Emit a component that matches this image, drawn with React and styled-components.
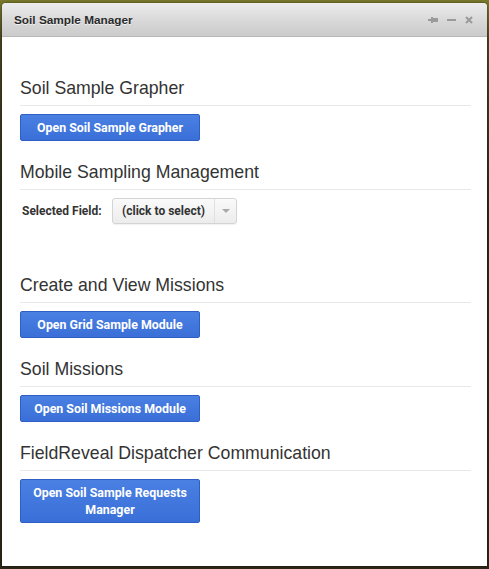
import React from 'react';
import styled, {createGlobalStyle} from 'styled-components';

const GlobalStyle = createGlobalStyle`
  html, body {
    margin: 0;
    padding: 0;
    height: 100%;
  }
  body {
    background: linear-gradient(180deg, #7a7a2c 0px, #4a4522 40px, #2b2a1c 200px, #2c2718 569px);
    font-family: "Liberation Sans", Arial, sans-serif;
  }
`;

const Page = styled.div`
  width: 489px;
  height: 569px;
  padding: 3px 2px 0 2px;
  box-sizing: border-box;
`;

const Window = styled.div`
  width: 485px;
  height: 563px;
  background: #fff;
  border-radius: 4px 4px 0 0;
  overflow: hidden;
  display: flex;
  flex-direction: column;
  box-shadow: 0 0 3px rgba(0, 0, 0, 0.5);
`;

const TitleBar = styled.div`
  height: 33px;
  flex: none;
  display: flex;
  align-items: center;
  justify-content: space-between;
  padding: 0 14px 0 12px;
  background: linear-gradient(180deg, #ececec 0%, #d6d6d6 60%, #cbcbcb 100%);
  border-bottom: 1px solid #b8b8b8;
`;

const Title = styled.div`
  font-size: 11.8px;
  font-weight: bold;
  color: #2a2a2a;
  text-shadow: 0 1px 0 rgba(255, 255, 255, 0.7);
`;

const Tools = styled.div`
  display: flex;
  align-items: center;
  gap: 9px;
`;

const Body = styled.div`
  padding: 41px 16px 0 18px;
`;

const Section = styled.div`
  margin-bottom: ${p => p.$gap || 21}px;
`;

const Heading = styled.h2`
  margin: 0 0 8px 0;
  padding: 0 0 7px 0;
  font-size: 17.7px;
  line-height: 20px;
  font-weight: normal;
  color: #333;
  border-bottom: 1px solid #e8e8e8;
`;

const Button = styled.button`
  display: block;
  width: 180px;
  min-height: 26px;
  padding: 4px 10px;
  border: 1px solid #2f5fc4;
  border-radius: 2px;
  background: linear-gradient(180deg, #4a80e2 0%, #3a6fd8 100%);
  color: #fff;
  font-family: Roboto, "Liberation Sans", Arial, sans-serif;
  font-size: 12.4px;
  font-weight: bold;
  line-height: 17px;
  text-align: center;
  cursor: pointer;
`;

const FieldRow = styled.div`
  display: flex;
  align-items: center;
  padding-left: 2px;
  margin-top: 4px;
`;

const Label = styled.span`
  font-family: Roboto, "Liberation Sans", Arial, sans-serif;
  font-size: 12px;
  font-weight: bold;
  color: #333;
  width: 90px;
`;

const Select = styled.div`
  display: flex;
  width: 125px;
  height: 26px;
  box-sizing: border-box;
  border: 1px solid #d4d4d4;
  border-radius: 3px;
  background: linear-gradient(180deg, #fafafa 0%, #ececec 100%);
  box-shadow: 0 1px 1px rgba(0, 0, 0, 0.06);
`;

const SelectText = styled.div`
  flex: 1;
  display: flex;
  align-items: center;
  justify-content: center;
  font-family: Roboto, "Liberation Sans", Arial, sans-serif;
  font-size: 12px;
  font-weight: bold;
  color: #333;
`;

const Caret = styled.div`
  width: 21px;
  border-left: 1px solid #e0e0e0;
  display: flex;
  align-items: center;
  justify-content: center;
  &::after {
    content: '';
    border-left: 4px solid transparent;
    border-right: 4px solid transparent;
    border-top: 4px solid #aaa;
  }
`;

const PinIcon = () => (
  <svg width="10" height="8" viewBox="0 0 10 8">
    <rect x="0" y="3" width="3" height="2" fill="#9a9a9a" />
    <rect x="3" y="1" width="2" height="6" fill="#9a9a9a" />
    <rect x="5" y="2" width="5" height="4" fill="#9a9a9a" />
  </svg>
);

const MinIcon = () => (
  <svg width="9" height="8" viewBox="0 0 9 8">
    <rect x="0" y="3" width="9" height="2" fill="#9a9a9a" />
  </svg>
);

const CloseIcon = () => (
  <svg width="8" height="8" viewBox="0 0 8 8">
    <path d="M1 1 L7 7 M7 1 L1 7" stroke="#9a9a9a" strokeWidth="2" />
  </svg>
);

export default function App() {
  return (
    <Page>
      <GlobalStyle />
      <Window>
        <TitleBar>
          <Title>Soil Sample Manager</Title>
          <Tools>
            <PinIcon />
            <MinIcon />
            <CloseIcon />
          </Tools>
        </TitleBar>
        <Body>
          <Section>
            <Heading>Soil Sample Grapher</Heading>
            <Button>Open Soil Sample Grapher</Button>
          </Section>
          <Section $gap={51}>
            <Heading>Mobile Sampling Management</Heading>
            <FieldRow>
              <Label>Selected Field:</Label>
              <Select>
                <SelectText>(click to select)</SelectText>
                <Caret />
              </Select>
            </FieldRow>
          </Section>
          <Section>
            <Heading>Create and View Missions</Heading>
            <Button>Open Grid Sample Module</Button>
          </Section>
          <Section>
            <Heading>Soil Missions</Heading>
            <Button>Open Soil Missions Module</Button>
          </Section>
          <Section>
            <Heading>FieldReveal Dispatcher Communication</Heading>
            <Button>Open Soil Sample Requests Manager</Button>
          </Section>
        </Body>
      </Window>
    </Page>
  );
}
